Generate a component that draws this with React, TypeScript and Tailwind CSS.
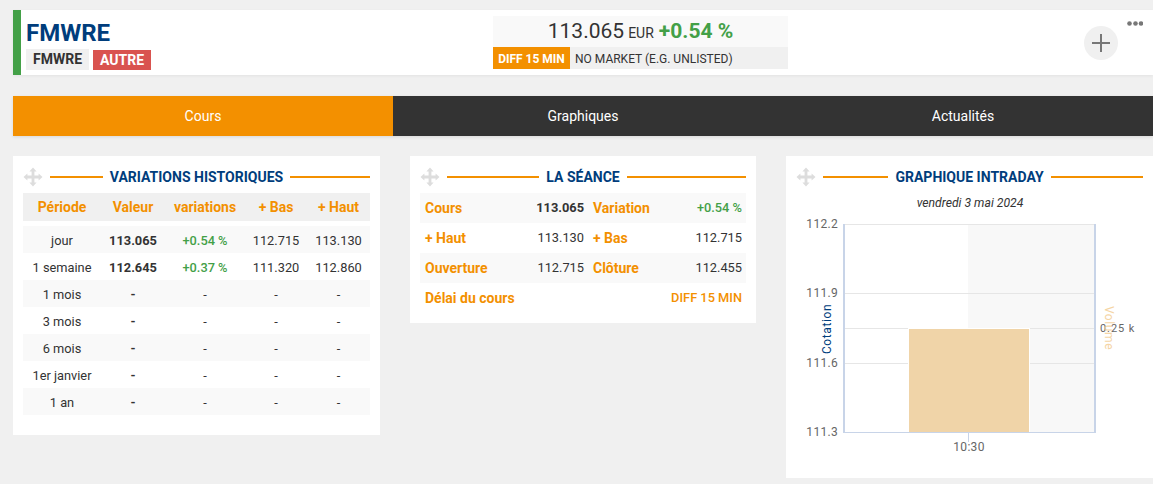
const ORANGE = "text-[#f39000]";

function MoveIcon() {
  return (
    <svg width="20" height="20" viewBox="0 0 20 20" className="shrink-0 text-[#dddddd]" fill="currentColor">
      <path d="M10 0.5 L13.6 4.4 H11.4 V8.6 H15.6 V6.4 L19.5 10 L15.6 13.6 V11.4 H11.4 V15.6 H13.6 L10 19.5 L6.4 15.6 H8.6 V11.4 H4.4 V13.6 L0.5 10 L4.4 6.4 V8.6 H8.6 V4.4 H6.4 Z" />
    </svg>
  );
}

function CardTitle({ title }: { title: string }) {
  return (
    <div className="flex h-[37px] items-center pt-[5px]">
      <div className="flex flex-1 items-center">
        <MoveIcon />
        <div className="ml-[7px] h-[2px] flex-1 bg-[#f39000]" />
      </div>
      <div className="-mt-[1px] px-[7px] text-[14px] leading-[20px] font-bold text-[#003d7c]">{title}</div>
      <div className="h-[2px] flex-1 bg-[#f39000]" />
    </div>
  );
}

const COLS = "grid grid-cols-[78px_64px_80px_62px_63px] items-center text-center";

const rows = [
  ["jour", "113.065", "+0.54 %", "112.715", "113.130"],
  ["1 semaine", "112.645", "+0.37 %", "111.320", "112.860"],
  ["1 mois", "-", "-", "-", "-"],
  ["3 mois", "-", "-", "-", "-"],
  ["6 mois", "-", "-", "-", "-"],
  ["1er janvier", "-", "-", "-", "-"],
  ["1 an", "-", "-", "-", "-"],
];

function History() {
  return (
    <section className="h-[279px] w-[367px] shrink-0 bg-white px-[10px]">
      <CardTitle title="VARIATIONS HISTORIQUES" />
      <div className={`${COLS} h-[28px] bg-[#f0f0f0] text-[14px] font-bold ${ORANGE}`}>
        <div>Période</div>
        <div>Valeur</div>
        <div>variations</div>
        <div>+ Bas</div>
        <div>+ Haut</div>
      </div>
      <div className="mt-[5px]">
        {rows.map((r, i) => (
          <div key={r[0]} className={`${COLS} h-[27px] pt-[2px] text-[12.8px] text-[#333333] ${i % 2 === 0 ? "bg-[#f9f9f9]" : "bg-white"}`}>
            <div>{r[0]}</div>
            <div className="font-bold">{r[1]}</div>
            <div className={r[2] === "-" ? "" : "font-medium text-[#43a047]"}>{r[2]}</div>
            <div>{r[3]}</div>
            <div>{r[4]}</div>
          </div>
        ))}
      </div>
    </section>
  );
}

const SEANCE = "grid h-[30px] grid-cols-[168px_158px] items-center";

function Pair({ label, value, valueClass = "" }: { label: string; value: string; valueClass?: string }) {
  return (
    <div className="flex items-center justify-between pr-[4px] pl-[5px]">
      <span className={`text-[14px] font-bold ${ORANGE}`}>{label}</span>
      <span className={`text-[12.8px] text-[#333333] ${valueClass}`}>{value}</span>
    </div>
  );
}

function Seance() {
  return (
    <section className="h-[167px] w-[346px] shrink-0 bg-white px-[10px]">
      <CardTitle title="LA SÉANCE" />
      <div className={`${SEANCE} bg-[#f9f9f9]`}>
        <Pair label="Cours" value="113.065" valueClass="font-bold" />
        <Pair label="Variation" value="+0.54 %" valueClass="font-medium !text-[#43a047]" />
      </div>
      <div className={SEANCE}>
        <Pair label="+ Haut" value="113.130" />
        <Pair label="+ Bas" value="112.715" />
      </div>
      <div className={`${SEANCE} bg-[#f9f9f9]`}>
        <Pair label="Ouverture" value="112.715" />
        <Pair label="Clôture" value="112.455" />
      </div>
      <div className="flex h-[30px] items-center justify-between pr-[4px] pl-[5px]">
        <span className={`text-[14px] font-bold ${ORANGE}`}>Délai du cours</span>
        <span className={`text-[12.8px] font-medium ${ORANGE}`}>DIFF 15 MIN</span>
      </div>
    </section>
  );
}

function Chart() {
  const labelStyle = { fontFamily: "Roboto, sans-serif", fontSize: 12, letterSpacing: "0.3px" };
  const grid = [293.5, 328.5, 363.5];
  return (
    <svg width="367" height="260" viewBox="786 218 367 260" className="block">
      <rect x="968" y="224" width="127" height="208" fill="#f8f8f8" />
      <line x1="843" x2="1095" y1="224.5" y2="224.5" fill="none" stroke="#e6e6e6" />
      {grid.map((y) => (
        <line key={y} x1="843" x2="1095" y1={y} y2={y} stroke="#e6e6e6" />
      ))}
      <rect x="908.5" y="328.5" width="121" height="104" fill="#f0d4a8" stroke="#ffffff" />
      <line x1="844" x2="844" y1="224" y2="433" stroke="#c8d4e8" strokeWidth="2" />
      <line x1="1095" x2="1095" y1="224" y2="433" stroke="#c8d4e8" strokeWidth="2" />
      <line x1="843" x2="1096" y1="432.5" y2="432.5" stroke="#c8d4e8" />
      <line x1="968.5" x2="968.5" y1="433" y2="442" stroke="#c8d4e8" />
      {[["112.2", 228], ["111.9", 297], ["111.6", 367], ["111.3", 436]].map(([t, y]) => (
        <text key={t} x="838" y={y} textAnchor="end" fill="#666666" style={labelStyle}>{t}</text>
      ))}
      <text x="969" y="451" textAnchor="middle" fill="#666666" style={labelStyle}>10:30</text>
      <text x="1100" y="332" fill="#666666" style={{ ...labelStyle, fontSize: 11, letterSpacing: "0.9px" }}>0.25 k</text>
      <text transform="translate(831 329) rotate(-90)" textAnchor="middle" fill="#003d7c" style={{ ...labelStyle, letterSpacing: "0.6px" }}>Cotation</text>
      <text transform="translate(1105 328) rotate(90)" textAnchor="middle" fill="#f5d5a5" style={{ ...labelStyle, letterSpacing: "0.6px" }}>Volume</text>
    </svg>
  );
}

function Intraday() {
  return (
    <section className="h-[322px] w-[367px] shrink-0 bg-white">
      <div className="px-[10px]">
        <CardTitle title="GRAPHIQUE INTRADAY" />
      </div>
      <div className="flex h-[25px] items-center justify-center pb-[5px] pl-[1px] text-[12.2px] text-[#333333] italic">
        vendredi 3 mai 2024
      </div>
      <Chart />
    </section>
  );
}

export default function App() {
  return (
    <div className="h-[484px] overflow-hidden bg-[#f0f0f0] pt-[10px] pl-[13px] font-['Roboto',sans-serif]">
      <header className="relative flex h-[65px] border-l-[8px] border-[#43a047] bg-white shadow-[0_1px_3px_rgba(0,0,0,0.06)]">
        <div className="w-[472px] pl-[5px]">
          <div className="mt-[8px] h-[29px] text-[24px] leading-[30px] font-bold text-[#003d7c]">FMWRE</div>
          <div className="mt-[2px] flex items-end">
            <span className="flex h-[21px] w-[63px] items-center justify-center bg-[#f0f0f0] text-[14px] font-bold text-[#333333]">FMWRE</span>
            <span className="ml-[4px] flex h-[20px] w-[58px] items-center justify-center bg-[#d9534f] text-[14px] font-bold text-white">AUTRE</span>
          </div>
        </div>
        <div className="mt-[6px] h-[53px] w-[295px] bg-[#f9f9f9]">
          <div className="flex h-[31px] items-center justify-center gap-[4px] whitespace-nowrap text-[#333333]">
            <span className="text-[21px]">113.065</span>
            <span className="mt-[3px] text-[14px]">EUR</span>
            <span className="ml-[1px] text-[21px] font-bold text-[#43a047]">+0.54 %</span>
          </div>
          <div className="flex h-[22px] items-center bg-[#f0f0f0] text-[12px] text-[#333333]">
            <span className="flex h-full w-[77px] items-center justify-center bg-[#f39000] pt-[1px] font-bold text-white">DIFF 15 MIN</span>
            <span className="ml-[5px] pt-[1px]">NO MARKET (E.G. UNLISTED)</span>
          </div>
        </div>
        <button className="mt-[16px] ml-[296px] flex h-[34px] w-[34px] items-center justify-center rounded-full bg-[#f0f0f0]">
          <svg width="18" height="18" viewBox="0 0 18 18" stroke="#777777" strokeWidth="2">
            <path d="M9 0v18M0 9h18" />
          </svg>
        </button>
        <svg width="16" height="5" viewBox="0 0 16 5" fill="#777777" className="absolute top-[11px] right-[10px]">
          <circle cx="2.5" cy="2.5" r="2.3" />
          <circle cx="8.5" cy="2.5" r="2.3" />
          <circle cx="14" cy="2.5" r="2.3" />
        </svg>
      </header>

      <nav className="mt-[21px] grid h-[40px] grid-cols-3 bg-[#333333] text-[14px] text-white shadow-[0_1px_3px_rgba(0,0,0,0.1)]">
        <div className="flex items-center justify-center bg-[#f39000]">Cours</div>
        <div className="flex items-center justify-center">Graphiques</div>
        <div className="flex items-center justify-center">Actualités</div>
      </nav>

      <main className="mt-[20px] flex items-start gap-[30px]">
        <History />
        <Seance />
        <Intraday />
      </main>
    </div>
  );
}
